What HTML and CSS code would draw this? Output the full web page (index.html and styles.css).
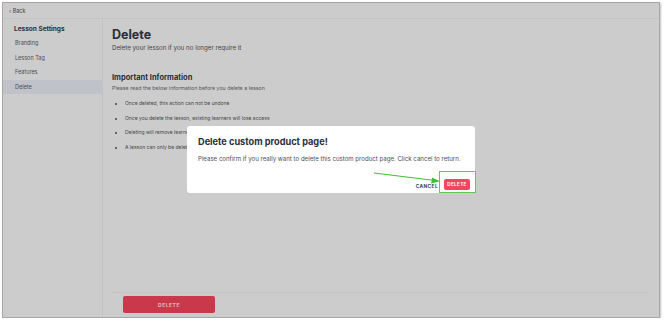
FILE: index.html
```html
<!DOCTYPE html>
<html lang="en">
<head>
<meta charset="UTF-8">
<meta name="viewport" content="width=device-width, initial-scale=1.0">
<title>Lesson Settings - Delete</title>
<link rel="stylesheet" href="styles.css">
</head>
<body>

<div class="frame">
    <div class="topbar">&lsaquo; Back</div>

    <div class="layout">
        <aside class="sidebar">
            <h3>Lesson Settings</h3>
            <ul class="menu">
                <li>Branding</li>
                <li>Lesson Tag</li>
                <li>Features</li>
                <li class="active">Delete</li>
            </ul>
        </aside>

        <main class="main">
            <div class="content">
                <h1>Delete</h1>
                <p class="subtitle">Delete your lesson if you no longer require it</p>

                <h2>Important Information</h2>
                <p class="note">Please read the below information before you delete a lesson</p>
                <ul class="rules">
                    <li>Once deleted, this action can not be undone</li>
                    <li>Once you delete the lesson, existing learners will lose access</li>
                    <li>Deleting will remove learners from the lesson</li>
                    <li>A lesson can only be deleted by the owner</li>
                </ul>
            </div>
            <div class="footer">
                <button class="btn-delete">DELETE</button>
            </div>
        </main>
    </div>

    <!-- confirm dialog -->
    <div class="modal">
        <h4>Delete custom product page!</h4>
        <p>Please confirm if you really want to delete this custom product page. Click cancel to return.</p>
        <div class="modal-actions">
            <span class="cancel">CANCEL</span>
            <span class="highlight">
                <button class="btn-confirm">DELETE</button>
            </span>
        </div>
    </div>

    <svg class="arrow" width="80" height="20" viewBox="0 0 80 20">
        <line x1="1" y1="2" x2="62" y2="9.5" stroke="#3fbf2f" stroke-width="1"/>
        <polygon points="67,10.2 59,6.5 58.2,12.5" fill="#3fbf2f"/>
    </svg>
</div>

</body>
</html>
```

FILE: styles.css
```css
body {
    margin: 0;
    background-color: #ffffff;
    font-family: Inter, "Open Sans", sans-serif;
    color: #2b2e3b;
}

.frame {
    position: relative;
    margin: 2px 0 0 2px;
    width: 656px;
    height: 314px;
    border: 1px solid #a6a6a6;
    background-color: #cccccc;
    box-shadow: 1px 1px 2px rgba(0, 0, 0, 0.25);
    display: flex;
    flex-direction: column;
    overflow: hidden;
}

.topbar {
    height: 15px;
    border-bottom: 1px solid #c3c3c3;
    font-size: 5.5px;
    color: #444;
    padding-left: 6px;
    line-height: 16px;
}

.layout {
    flex: 1;
    display: flex;
}

.sidebar {
    width: 99px;
    border-right: 1px solid #c2c2c2;
}

.sidebar h3 {
    margin: 6px 0 2px 11px;
    font-size: 6.5px;
    line-height: 9px;
    font-weight: 700;
}

.menu {
    list-style: none;
    margin: 0;
    padding: 0;
}

.menu li {
    height: 14.5px;
    line-height: 14.5px;
    padding-left: 12px;
    font-size: 5.5px;
    color: #4a4d58;
}

.menu li.active {
    background-color: #bfc2c9;
}

.main {
    flex: 1;
    display: flex;
    flex-direction: column;
}

.content {
    flex: 1;
    padding: 8px 0 0 9px;
}

.content h1 {
    margin: 0;
    font-size: 12.5px;
    font-weight: 700;
    line-height: 15px;
}

.subtitle {
    margin: 2px 0 0;
    font-size: 6.2px;
    color: #444;
}

.content h2 {
    margin: 22px 0 0;
    font-size: 7.5px;
    font-weight: 700;
}

.note {
    margin: 3px 0 0;
    font-size: 5.3px;
    color: #555;
}

.rules {
    margin: 5px 0 0;
    padding-left: 13px;
    font-size: 5px;
    color: #444;
}

.rules li {
    line-height: 14.7px;
}

.footer {
    margin: 0 10px;
    border-top: 1px solid #c2c2c2;
    height: 25px;
    padding: 3px 0 0 10px;
    box-sizing: border-box;
}

.btn-delete {
    display: block;
    width: 92px;
    height: 17px;
    border: none;
    border-radius: 2px;
    background-color: #c9384b;
    color: #e3b7bd;
    font-family: inherit;
    font-size: 5px;
    font-weight: 700;
    letter-spacing: 0.5px;
}

.modal {
    position: absolute;
    left: 184px;
    top: 123px;
    width: 288px;
    height: 67px;
    box-sizing: border-box;
    background-color: #ffffff;
    border-radius: 3px;
    padding: 10px 11px 0;
}

.modal h4 {
    margin: 0;
    font-size: 9.2px;
    font-weight: 700;
    line-height: 12px;
}

.modal p {
    margin: 7px 0 0;
    font-size: 6.1px;
    color: #4a4d58;
}

.modal-actions {
    display: flex;
    justify-content: flex-end;
    align-items: flex-end;
    margin-top: 9px;
    margin-right: -12px;
}

.cancel {
    font-size: 4.8px;
    font-weight: 700;
    letter-spacing: 0.4px;
    color: #3a3d48;
    margin: 0 1px 4px 0;
}

.highlight {
    border: 1.5px solid #62c957;
    padding: 7px 5px 2px 4px;
}

.btn-confirm {
    display: block;
    width: 26px;
    height: 11px;
    padding: 0;
    border: none;
    border-radius: 2px;
    background-color: #f24560;
    color: #ffffff;
    font-family: inherit;
    font-size: 4.5px;
    font-weight: 700;
    letter-spacing: 0.4px;
}

.arrow {
    position: absolute;
    left: 370px;
    top: 168px;
}
```
